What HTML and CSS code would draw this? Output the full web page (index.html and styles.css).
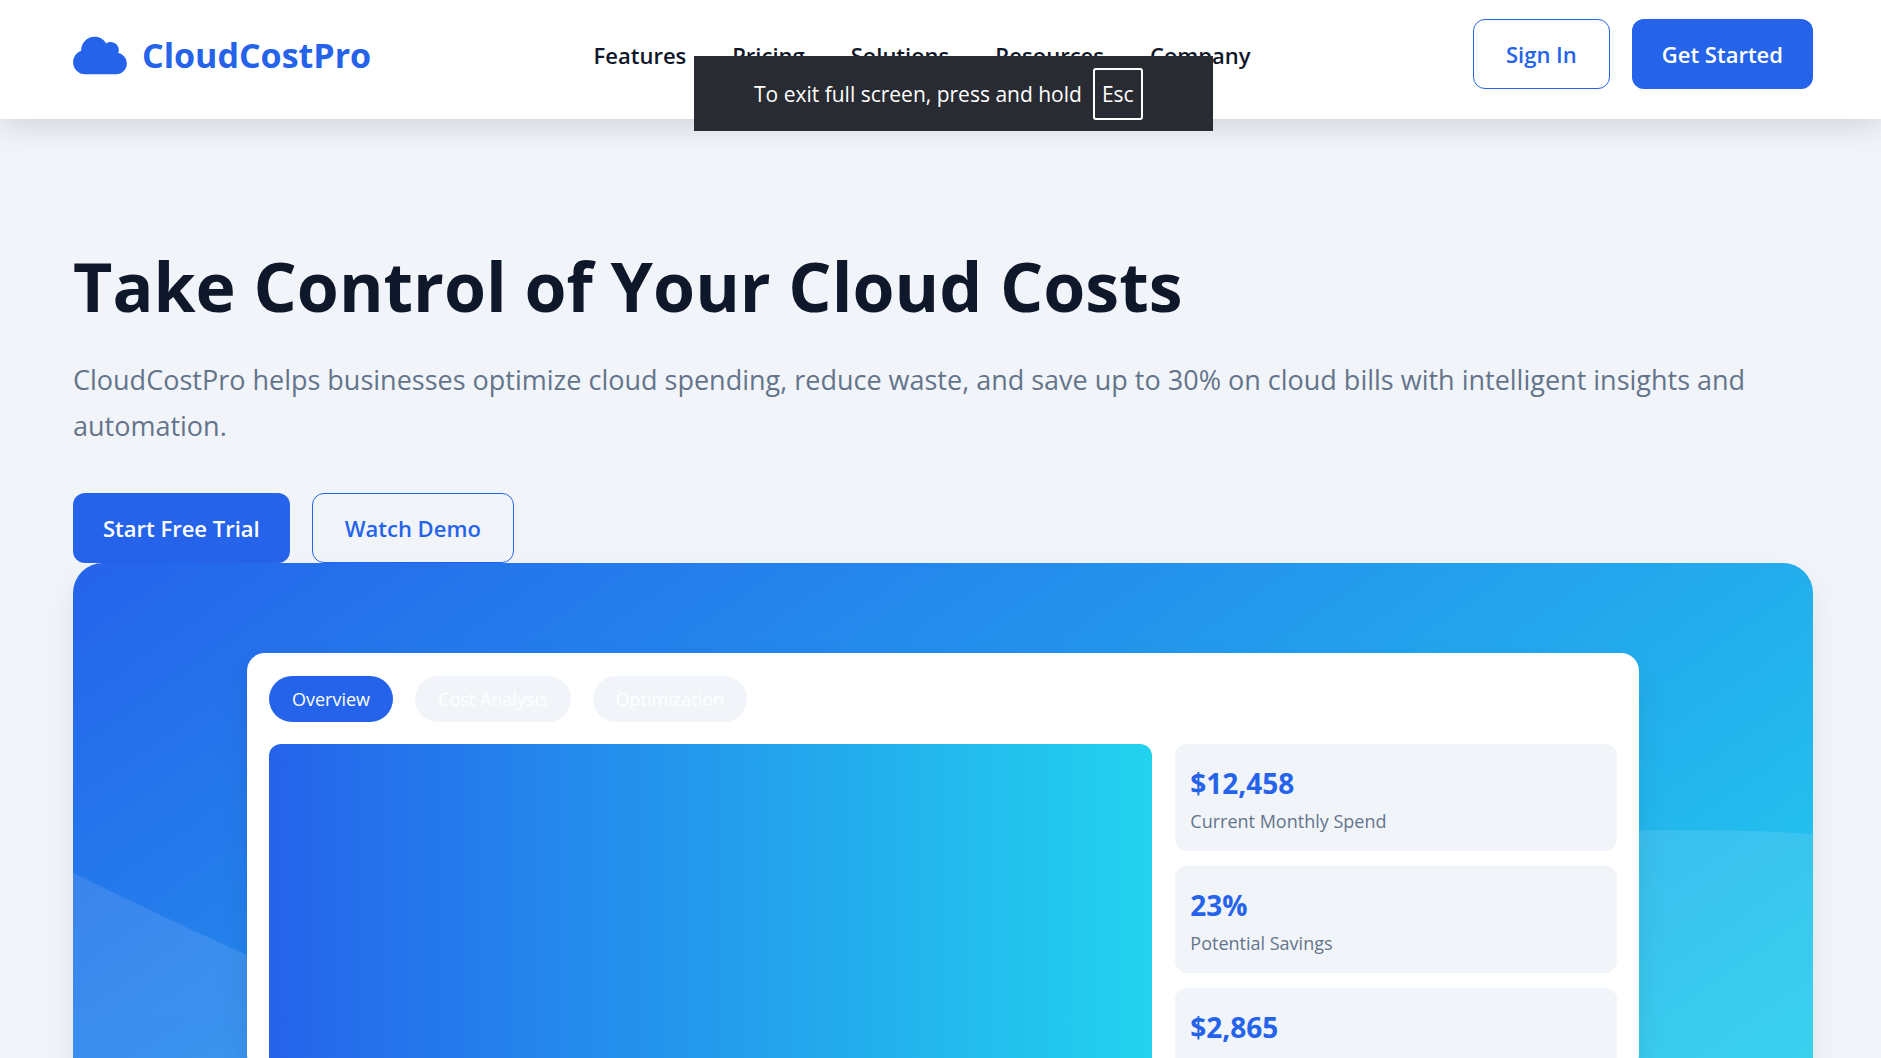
FILE: index.html
```
<!DOCTYPE html>
<html lang="en">
<head>
    <meta charset="UTF-8">
    <meta name="viewport" content="width=device-width, initial-scale=1.0">
    <title>CloudCostPro</title>
    <link rel="stylesheet" href="styles.css">
</head>
<body>

    <header>
        <div class="container header-container">
            <a href="#" class="logo">
                <svg class="logo-icon" viewBox="0 0 640 512" aria-hidden="true"><path d="M0 336c0 79.500 64.500 144 144 144H512c70.700 0 128-57.300 128-128c0-61.900-44-113.600-102.400-125.400c4.100-10.700 6.400-22.400 6.400-34.600c0-53-43-96-96-96c-19.700 0-38.100 6-53.300 16.200C367 64.200 315.300 32 256 32C167.600 32 96 103.600 96 192c0 2.700 .1 5.400 .2 8.100C40.200 219.800 0 273.200 0 336z"/></svg>
                <span>CloudCostPro</span>
            </a>
            <nav>
                <ul class="nav-links">
                    <li><a href="#features">Features</a></li>
                    <li><a href="#pricing">Pricing</a></li>
                    <li><a href="#solutions">Solutions</a></li>
                    <li><a href="#resources">Resources</a></li>
                    <li><a href="#company">Company</a></li>
                </ul>
            </nav>
            <div class="buttons">
                <a href="#signin" class="btn btn-outline">Sign In</a>
                <a href="#start" class="btn btn-primary">Get Started</a>
            </div>
        </div>
    </header>

    <main class="container hero">
        <h1>Take Control of Your Cloud Costs</h1>
        <p class="hero-text">CloudCostPro helps businesses optimize cloud spending, reduce waste, and save up to 30% on cloud bills with intelligent insights and automation.</p>
        <div class="buttons">
            <a href="#trial" class="btn btn-primary">Start Free Trial</a>
            <a href="#demo" class="btn btn-outline">Watch Demo</a>
        </div>

        <section class="hero-image">
            <svg class="wave" viewBox="0 0 1740 350" preserveAspectRatio="none" aria-hidden="true">
                <path d="M0 60L58 88C100 108 140 127 174 142C520 290 760 250 1000 150C1240 50 1380 17 1600 17C1650 17 1700 18 1740 21V350H0Z"/>
            </svg>
            <div class="dashboard">
                <div class="tabs">
                    <button type="button" class="tab active">Overview</button>
                    <button type="button" class="tab">Cost Analysis</button>
                    <button type="button" class="tab">Optimization</button>
                </div>
                <div class="dashboard-content">
                    <div class="chart"></div>
                    <div class="stats">
                        <div class="stat">
                            <div class="stat-value">$12,458</div>
                            <div class="stat-label">Current Monthly Spend</div>
                        </div>
                        <div class="stat">
                            <div class="stat-value">23%</div>
                            <div class="stat-label">Potential Savings</div>
                        </div>
                        <div class="stat">
                            <div class="stat-value">$2,865</div>
                        </div>
                    </div>
                </div>
            </div>
        </section>
    </main>

    <div class="fullscreen-note">
        <span>To exit full screen, press and hold</span>
        <kbd>Esc</kbd>
    </div>

</body>
</html>
```

FILE: styles.css
```
* {
    margin: 0;
    padding: 0;
    box-sizing: border-box;
}

:root {
    --primary: #2563eb;
    --accent: #22d3ee;
    --dark: #0f172a;
    --gray: #64748b;
    --light: #f1f5f9;
}

body {
    font-family: "Open Sans", "Noto Sans", sans-serif;
    font-size: 22px;
    line-height: 36px;
    color: var(--dark);
    background-color: var(--light);
}

a {
    color: inherit;
    text-decoration: none;
}

.container {
    padding: 0 68px 0 73px;
}

header {
    position: relative;
    background-color: white;
    box-shadow: 0 6px 30px rgba(0, 0, 0, 0.15);
}

.header-container {
    display: flex;
    justify-content: space-between;
    align-items: flex-start;
    padding-top: 19px;
    padding-bottom: 28px;
}

.logo {
    display: flex;
    align-items: center;
    gap: 15px;
    height: 72px;
    font-size: 34px;
    font-weight: 700;
    color: var(--primary);
}

.logo-icon {
    width: 54px;
    height: 43px;
    fill: currentColor;
}

.nav-links {
    display: flex;
    align-items: center;
    gap: 46px;
    height: 72px;
    list-style: none;
    font-weight: 600;
}

.buttons {
    display: flex;
    gap: 22px;
}

.btn {
    display: flex;
    align-items: center;
    height: 70px;
    padding: 0 30px;
    border-radius: 12px;
    font-weight: 600;
}

.btn-primary {
    color: white;
    background-color: var(--primary);
}

.btn-outline {
    padding: 0 32px;
    color: var(--primary);
    border: 1px solid var(--primary);
}

.hero h1 {
    padding-top: 124px;
    margin-bottom: 28px;
    font-size: 68px;
    line-height: 86px;
    font-weight: 700;
}

.hero-text {
    margin-bottom: 44px;
    font-size: 27px;
    line-height: 46px;
    color: var(--gray);
}

.hero-image {
    position: relative;
    height: 600px;
    padding: 90px 10% 0;
    border-radius: 30px;
    background: linear-gradient(145deg, var(--primary), var(--accent));
    box-shadow: 0 15px 30px rgba(0, 0, 0, 0.08);
    overflow: hidden;
}

/* pale wave behind the dashboard */
.wave {
    position: absolute;
    left: 0;
    bottom: 0;
    width: 100%;
    height: 350px;
    fill: white;
    opacity: 0.1;
}

.dashboard {
    position: relative;
    height: 420px;
    padding: 23px 22px;
    border-radius: 18px;
    background-color: white;
    box-shadow: 0 15px 30px rgba(0, 0, 0, 0.08);
    overflow: hidden;
}

.tabs {
    display: flex;
    gap: 22px;
    margin-bottom: 22px;
}

.tab {
    height: 46px;
    padding: 0 23px;
    border: none;
    border-radius: 23px;
    font-family: inherit;
    font-size: 18px;
    color: white;
    background-color: var(--light);
    cursor: pointer;
}

.tab.active {
    background-color: var(--primary);
}

.dashboard-content {
    display: grid;
    grid-template-columns: 2fr 1fr;
    gap: 23px;
}

.chart {
    border-radius: 12px;
    background: linear-gradient(90deg, var(--primary), var(--accent));
}

.stats {
    display: flex;
    flex-direction: column;
    gap: 15px;
}

.stat {
    height: 107px;
    padding: 17px 15px;
    border-radius: 12px;
    background-color: var(--light);
}

.stat-value {
    font-size: 28px;
    line-height: 44px;
    font-weight: 700;
    color: var(--primary);
}

.stat-label {
    font-size: 18px;
    line-height: 32px;
    color: var(--gray);
}

.fullscreen-note {
    position: fixed;
    top: 56px;
    left: 694px;
    display: flex;
    align-items: center;
    gap: 11px;
    width: 519px;
    height: 75px;
    padding-left: 60px;
    color: white;
    background-color: #292b33;
    font-size: 21px;
}

.fullscreen-note kbd {
    padding: 6px 7px;
    border: 2px solid white;
    border-radius: 3px;
    font-family: inherit;
    font-size: 21px;
}
```
